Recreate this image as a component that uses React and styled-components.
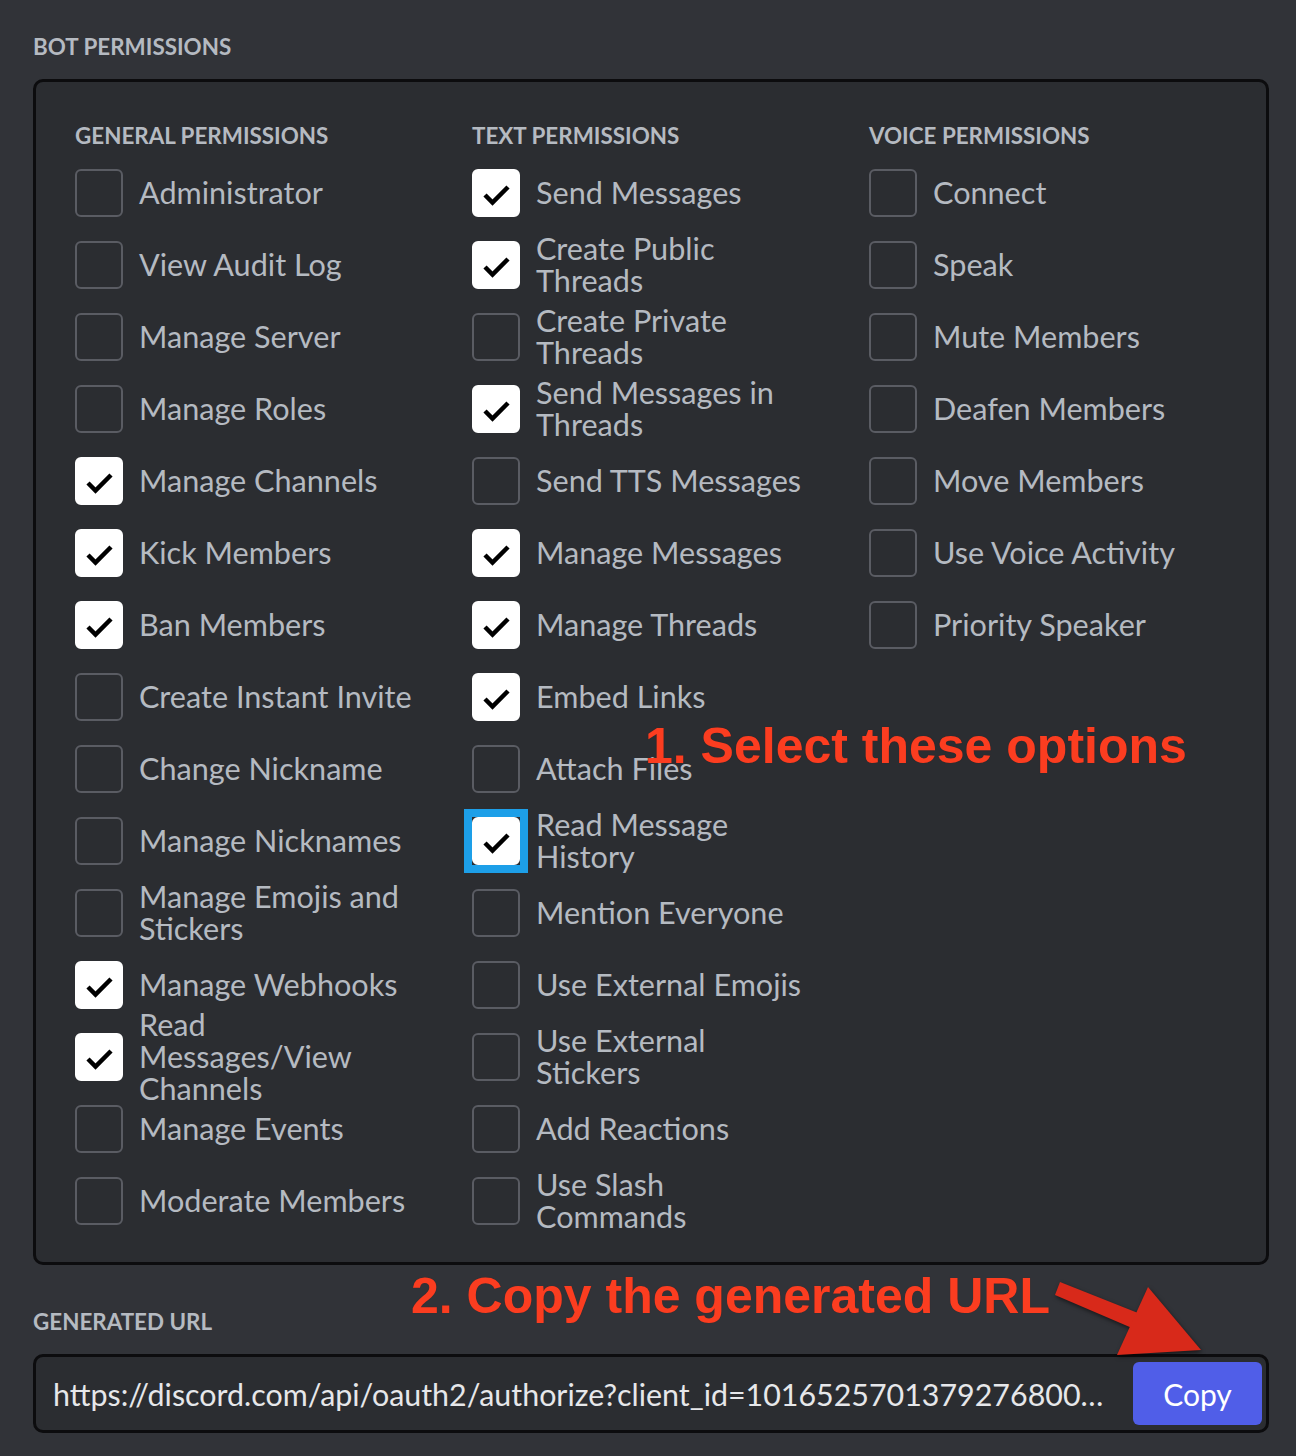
import React from "react";
import styled, { createGlobalStyle } from "styled-components";

const Global = createGlobalStyle`
  html, body { margin: 0; padding: 0; background: #313338; }
  body { font-family: "Lato", "Noto Sans", sans-serif; -webkit-font-smoothing: antialiased; }
`;

const Page = styled.div`
  position: relative;
  width: 1296px;
  height: 1456px;
  box-sizing: border-box;
  padding: 31px 27px 23px 33px;
  background: #313338;
  display: flex;
  flex-direction: column;
`;

const SectionLabel = styled.div`
  font-family: "Lato", "Noto Sans", sans-serif;
  font-weight: 700;
  font-size: 22.4px;
  line-height: 32px;
  color: #b5bac1;
  text-transform: uppercase;
  margin-top: ${(p) => p.$top || 0}px;
  margin-bottom: 16px;
`;

const Panel = styled.div`
  background: #2b2d31;
  border: 3px solid #0c0c0e;
  border-radius: 10px;
  padding: 40px 0 37px 39px;
  display: grid;
  grid-template-columns: repeat(3, 1fr);
`;

const Column = styled.div`
  display: flex;
  flex-direction: column;
`;

const ColumnHeader = styled.div`
  font-family: "Lato", "Noto Sans", sans-serif;
  font-weight: 700;
  font-size: 22.4px;
  line-height: 28px;
  color: #b5bac1;
  text-transform: uppercase;
  margin-bottom: 19px;
`;

const List = styled.div`
  display: flex;
  flex-direction: column;
  gap: 24px;
`;

const Item = styled.div`
  display: flex;
  align-items: center;
  gap: 16px;
  height: 48px;
`;

const Box = styled.span`
  position: relative;
  flex: 0 0 auto;
  width: 48px;
  height: 48px;
  box-sizing: border-box;
  border-radius: 6px;
  border: 2px solid ${(p) => (p.$checked ? "#ffffff" : "#5a5c63")};
  background: ${(p) => (p.$checked ? "#ffffff" : "transparent")};

  ${(p) =>
    p.$highlight &&
    `
    &::before {
      content: "";
      position: absolute;
      left: -10px;
      top: -10px;
      width: 64px;
      height: 64px;
      border: 8px solid #1d9fe8;
      box-sizing: border-box;
    }
  `}
`;

const Label = styled.span`
  font-family: "Lato", "Noto Sans", sans-serif;
  font-size: 30.6px;
  line-height: 32px;
  color: #b5bac1;
  white-space: pre-line;
`;

const UrlField = styled.div`
  display: flex;
  align-items: center;
  height: 79px;
  box-sizing: border-box;
  border: 3px solid #0c0c0e;
  border-radius: 10px;
  background: #2b2d31;
  padding: 0 4px 0 17px;
  gap: 22px;
`;

const UrlText = styled.div`
  flex: 1 1 auto;
  min-width: 0;
  font-family: "Lato", "Noto Sans", sans-serif;
  font-size: 30.4px;
  line-height: 36px;
  color: #e6e7ea;
  white-space: nowrap;
  overflow: hidden;
  text-overflow: ellipsis;
`;

const CopyButton = styled.button`
  flex: 0 0 auto;
  width: 129px;
  height: 63px;
  border: none;
  border-radius: 6px;
  background: #505ee8;
  color: #ffffff;
  font-family: "Lato", "Noto Sans", sans-serif;
  font-size: 30px;
  cursor: pointer;
`;

const Annotation = styled.div`
  position: absolute;
  left: ${(p) => p.$x}px;
  top: ${(p) => p.$y}px;
  font-family: "Liberation Sans", Arial, sans-serif;
  font-weight: 700;
  font-size: 50px;
  line-height: 50px;
  color: #fb3d20;
  white-space: nowrap;
  text-shadow: 0 0 1px rgba(120, 20, 10, 0.4);
`;

const ArrowSvg = styled.svg`
  position: absolute;
  left: 1040px;
  top: 1270px;
  width: 180px;
  height: 100px;
  overflow: visible;
  filter: drop-shadow(1px 2px 2px rgba(0, 0, 0, 0.55));
`;

const Check = () => (
  <svg width="48" height="48" viewBox="0 0 48 48" style={{ position: "absolute", left: -2, top: -2 }}>
    <polyline
      points="13,26 20.5,33.5 36,18"
      fill="none"
      stroke="#000"
      strokeWidth="4.5"
      strokeLinejoin="miter"
    />
  </svg>
);

const columns = [
  {
    title: "General Permissions",
    items: [
      ["Administrator"],
      ["View Audit Log"],
      ["Manage Server"],
      ["Manage Roles"],
      ["Manage Channels", true],
      ["Kick Members", true],
      ["Ban Members", true],
      ["Create Instant Invite"],
      ["Change Nickname"],
      ["Manage Nicknames"],
      ["Manage Emojis and\nStickers"],
      ["Manage Webhooks", true],
      ["Read\nMessages/View\nChannels", true],
      ["Manage Events"],
      ["Moderate Members"],
    ],
  },
  {
    title: "Text Permissions",
    items: [
      ["Send Messages", true],
      ["Create Public\nThreads", true],
      ["Create Private\nThreads"],
      ["Send Messages in\nThreads", true],
      ["Send TTS Messages"],
      ["Manage Messages", true],
      ["Manage Threads", true],
      ["Embed Links", true],
      ["Attach Files"],
      ["Read Message\nHistory", true, true],
      ["Mention Everyone"],
      ["Use External Emojis"],
      ["Use External\nStickers"],
      ["Add Reactions"],
      ["Use Slash\nCommands"],
    ],
  },
  {
    title: "Voice Permissions",
    items: [
      ["Connect"],
      ["Speak"],
      ["Mute Members"],
      ["Deafen Members"],
      ["Move Members"],
      ["Use Voice Activity"],
      ["Priority Speaker"],
    ],
  },
];

export default function App() {
  return (
    <>
      <Global />
      <Page>
        <SectionLabel>Bot Permissions</SectionLabel>
        <Panel>
          {columns.map((col) => (
            <Column key={col.title}>
              <ColumnHeader>{col.title}</ColumnHeader>
              <List>
                {col.items.map(([label, checked, highlight]) => (
                  <Item key={label}>
                    <Box $checked={!!checked} $highlight={!!highlight}>
                      {checked && <Check />}
                    </Box>
                    <Label>{label}</Label>
                  </Item>
                ))}
              </List>
            </Column>
          ))}
        </Panel>
        <SectionLabel $top={41}>Generated URL</SectionLabel>
        <UrlField>
          <UrlText>
            https://discord.com/api/oauth2/authorize?client_id=1016525701379276800&amp;permissions=397284550672&amp;scope=bot
          </UrlText>
          <CopyButton>Copy</CopyButton>
        </UrlField>

        <Annotation $x={645} $y={721}>1. Select these options</Annotation>
        <Annotation $x={411} $y={1271}>2. Copy the generated URL</Annotation>
        <ArrowSvg viewBox="0 0 180 100">
          <polygon points="20,12 98,43 92,58 15,25" fill="#d8291a" />
          <polygon points="108,17 77,85 161,80" fill="#d8291a" />
        </ArrowSvg>
      </Page>
    </>
  );
}
